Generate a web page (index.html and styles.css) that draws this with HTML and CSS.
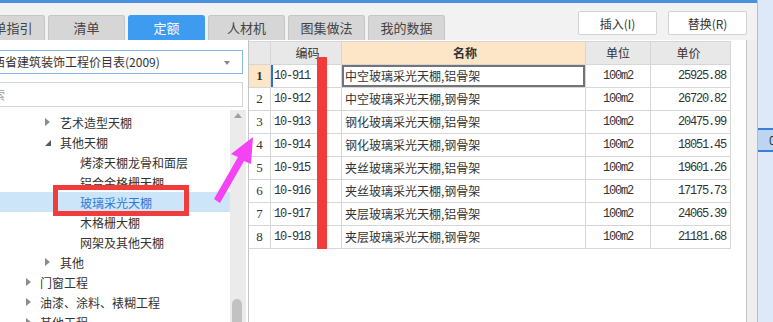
FILE: index.html
```html
<!DOCTYPE html>
<html lang="zh">
<head>
  <meta charset="UTF-8" />
  <title>定额</title>
  <link rel="stylesheet" href="styles.css">
</head>
<body>
<div class="app">
  <div class="main">
    <div class="topline"></div>
    <div class="toolbar">
      <div class="tabs">
        <div class="tab first">清单指引</div>
        <div class="tab">清单</div>
        <div class="tab active">定额</div>
        <div class="tab">人材机</div>
        <div class="tab">图集做法</div>
        <div class="tab">我的数据</div>
      </div>
      <div class="actions">
        <button class="btn">插入(I)</button>
        <button class="btn">替换(R)</button>
      </div>
    </div>

    <div class="content">
      <div class="left">
        <div class="select"><span>西省建筑装饰工程价目表(2009)</span><i class="caret"></i></div>
        <div class="search"><span>索</span></div>
        <div class="tree-wrap">
          <ul class="tree">
            <li class="lv2"><i class="tri"></i>艺术造型天棚</li>
            <li class="lv2"><i class="tri open"></i>其他天棚</li>
            <li class="lv3">烤漆天棚龙骨和面层</li>
            <li class="lv3">铝合金格栅天棚</li>
            <li class="lv3 selected">玻璃采光天棚</li>
            <li class="lv3">木格栅大棚</li>
            <li class="lv3">网架及其他天棚</li>
            <li class="lv2"><i class="tri"></i>其他</li>
            <li class="lv1"><i class="tri"></i>门窗工程</li>
            <li class="lv1"><i class="tri"></i>油漆、涂料、裱糊工程</li>
            <li class="lv1"><i class="tri"></i>其他工程</li>
          </ul>
          <div class="vscroll"><i class="up"></i><div class="thumb"></div></div>
        </div>
      </div>

      <div class="grid">
        <div class="row head">
          <div class="cell c-no"></div>
          <div class="cell c-code">编码</div>
          <div class="cell c-name">名称</div>
          <div class="cell c-unit">单位</div>
          <div class="cell c-price">单价</div>
        </div>
        <div class="row current">
          <div class="cell c-no">1</div>
          <div class="cell c-code">10-911</div>
          <div class="cell c-name">中空玻璃采光天棚,铝骨架</div>
          <div class="cell c-unit">100m2</div>
          <div class="cell c-price">25925.88</div>
        </div>
        <div class="row">
          <div class="cell c-no">2</div>
          <div class="cell c-code">10-912</div>
          <div class="cell c-name">中空玻璃采光天棚,钢骨架</div>
          <div class="cell c-unit">100m2</div>
          <div class="cell c-price">26720.82</div>
        </div>
        <div class="row">
          <div class="cell c-no">3</div>
          <div class="cell c-code">10-913</div>
          <div class="cell c-name">钢化玻璃采光天棚,铝骨架</div>
          <div class="cell c-unit">100m2</div>
          <div class="cell c-price">20475.99</div>
        </div>
        <div class="row">
          <div class="cell c-no">4</div>
          <div class="cell c-code">10-914</div>
          <div class="cell c-name">钢化玻璃采光天棚,钢骨架</div>
          <div class="cell c-unit">100m2</div>
          <div class="cell c-price">18051.45</div>
        </div>
        <div class="row">
          <div class="cell c-no">5</div>
          <div class="cell c-code">10-915</div>
          <div class="cell c-name">夹丝玻璃采光天棚,铝骨架</div>
          <div class="cell c-unit">100m2</div>
          <div class="cell c-price">19601.26</div>
        </div>
        <div class="row">
          <div class="cell c-no">6</div>
          <div class="cell c-code">10-916</div>
          <div class="cell c-name">夹丝玻璃采光天棚,钢骨架</div>
          <div class="cell c-unit">100m2</div>
          <div class="cell c-price">17175.73</div>
        </div>
        <div class="row">
          <div class="cell c-no">7</div>
          <div class="cell c-code">10-917</div>
          <div class="cell c-name">夹层玻璃采光天棚,铝骨架</div>
          <div class="cell c-unit">100m2</div>
          <div class="cell c-price">24065.39</div>
        </div>
        <div class="row">
          <div class="cell c-no">8</div>
          <div class="cell c-code">10-918</div>
          <div class="cell c-name">夹层玻璃采光天棚,钢骨架</div>
          <div class="cell c-unit">100m2</div>
          <div class="cell c-price">21181.68</div>
        </div>
      </div>
      <div class="strip"></div>
    </div>
  </div>

  <div class="side"><div class="side-item">0</div></div>

  <!-- annotations drawn over the screenshot -->
  <div class="mark-bar"></div>
  <div class="mark-box"></div>
  <svg class="mark-arrow" width="773" height="322" viewBox="0 0 773 322">
    <polygon points="253,137 251,164 244,161 220,203 214,199 238,157 231,154" fill="#f542f5"/>
  </svg>
</div>
</body>
</html>
```

FILE: styles.css
```css
body {
  margin: 0; font-family: "Noto Sans CJK SC", sans-serif; font-size: 12px;
  color: #333; background: #f0f0f0; overflow: hidden;
}
ul { margin: 0; padding: 0; list-style: none; }

.app {
  position: relative; display: flex; width: 773px; height: 322px; overflow: hidden;
}
.main { width: 757px; display: flex; flex-direction: column; }
.topline { height: 3px; background: #4a90e2; }

.toolbar {
  height: 37px; display: flex; justify-content: space-between;
  padding-right: 10px; background: #f2f2f2;
}
.tabs { display: flex; align-items: flex-end; }
.tab {
  width: 77px; height: 25px; margin-right: 3px; box-sizing: border-box;
  background: #d6d6d6; border: 1px solid #c6c6c6; border-bottom: none;
  border-radius: 3px 3px 0 0; text-align: center; line-height: 24px;
  font-size: 13px; color: #444; flex-shrink: 0;
}
.tab.first { margin-left: -32px; }
.tab.active { background: #3d9cf0; border-color: #3d9cf0; color: #fff; }

.actions { display: flex; gap: 11px; padding-top: 8px; }
.btn {
  width: 79px; height: 24px; padding: 0;
  background: #fff; border: 1px solid #d2d2d2; border-radius: 2px;
  font-family: "Noto Sans CJK SC", sans-serif; font-size: 12px; color: #333;
}

.content { flex: 1; display: flex; min-height: 0; }

.left {
  width: 249px; box-sizing: border-box; background: #fff;
  border-right: 1px solid #c4c4c4; padding-top: 10px; overflow: hidden;
}
.select, .search {
  width: 253px; margin-left: -10px; box-sizing: border-box;
  padding-left: 2px; white-space: nowrap; position: relative;
}
.select {
  height: 24px; line-height: 22px; border: 1px solid #86b7e9; font-size: 12px;
}
.caret {
  position: absolute; right: 12px; top: 10px;
  border-top: 4px solid #888; border-left: 3px solid transparent; border-right: 3px solid transparent;
}
.search {
  height: 25px; line-height: 23px; margin-top: 8px;
  border: 1px solid #d4d4d4; color: #9a9a9a;
}

.tree-wrap { display: flex; margin-top: 3px; height: 300px; }
.tree { width: 230px; padding-top: 2px; }
.tree li {
  height: 20px; display: flex; align-items: center; white-space: nowrap; color: #333;
}
.tree .lv1 { padding-left: 26px; }
.tree .lv2 { padding-left: 45px; }
.tree .lv3 { padding-left: 80px; }
.tree .selected { background: #cde5f8; color: #2b7bd8; }
.tri {
  width: 0; height: 0; margin-right: 10px;
  border-left: 5px solid #8c8c8c; border-top: 4px solid transparent; border-bottom: 4px solid transparent;
}
.lv1 .tri { margin-right: 9px; }
.tri.open {
  border-left: 6px solid transparent; border-bottom: 6px solid #5a5a5a; border-top: none;
  margin-right: 9px; margin-top: 2px;
}

.vscroll {
  width: 16px; background: #ebebeb; position: relative;
}
.up {
  position: absolute; left: 4px; top: 3px;
  border-bottom: 5px solid #a0a0a0; border-left: 4px solid transparent; border-right: 4px solid transparent;
}
.thumb {
  position: absolute; left: 2px; top: 189px; width: 10px; height: 40px;
  background: #c2c2c2; border-radius: 5px;
}

.grid {
  width: 498px; box-sizing: border-box; background: #fff;
  border-right: 1px solid #c4c4c4; padding-top: 1px;
}
.row {
  display: flex; height: 23px; box-sizing: border-box;
  border-bottom: 1px solid #d6d6d6; width: 482px;
}
.row.head { border-top: 1px solid #d6d6d6; height: 24px; }
.cell {
  box-sizing: border-box; border-right: 1px solid #d6d6d6;
  line-height: 22px; white-space: nowrap; overflow: hidden;
  font-family: "Liberation Mono", "Noto Sans CJK SC", monospace;
  font-size: 12px; letter-spacing: -1.2px;
}
.head .cell {
  background: #e8e8e8; text-align: center;
  font-family: "Noto Sans CJK SC", sans-serif; font-size: 12px; letter-spacing: 0;
}
.head .c-name { background: #fde5c7; font-weight: bold; }
.c-no {
  width: 22px; text-align: center;
  font-family: "Liberation Serif", serif; font-size: 13px; letter-spacing: 0;
}
.c-code { width: 71px; padding-left: 3px; }
.c-name {
  width: 244px; padding-left: 3px; font-size: 12px; letter-spacing: 0;
  font-family: "Noto Sans CJK SC", sans-serif;
}
.c-unit { width: 65px; text-align: center; }
.c-price { width: 80px; text-align: right; padding-right: 4px; }

.current .c-no { background: #fde5c7; font-weight: bold; }
.current .c-code { box-shadow: inset 2px 0 0 #2f6fcf; }
.current .c-name { box-shadow: inset 0 0 0 2px #747474; }

.strip { width: 10px; background: #eeeeee; }

.side {
  width: 16px; box-sizing: border-box; background: #dde9f8;
  border-left: 1px solid #aebed4;
}
.side-item {
  margin-top: 128px; height: 24px; box-sizing: border-box;
  border-top: 2px solid #3b7dd8; border-bottom: 2px solid #3b7dd8;
  background: #bcd5f2; padding-left: 11px; line-height: 20px; white-space: nowrap;
}

.mark-bar {
  position: absolute; left: 317px; top: 57px; width: 10px; height: 192px;
  background: #f23b3b;
}
.mark-box {
  position: absolute; left: 53px; top: 185px; width: 136px; height: 31px;
  box-sizing: border-box; border: 5px solid #f23b3b;
}
.mark-arrow { position: absolute; left: 0; top: 0; pointer-events: none; }
```
